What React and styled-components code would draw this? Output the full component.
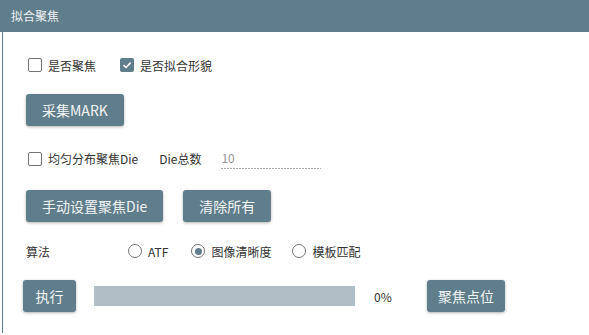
import styled, { createGlobalStyle } from 'styled-components';

const GlobalStyle = createGlobalStyle`
  body {
    margin: 0;
    background: #fff;
    font-family: 'Noto Sans CJK SC', 'Noto Sans', sans-serif;
    color: #333;
  }
`;

const Panel = styled.div`
  width: 589px;
  height: 335px;
  overflow: hidden;
`;

const Header = styled.div`
  height: 32px;
  line-height: 31px;
  padding-left: 11px;
  background: #607d8b;
  color: #eef2f4;
  font-size: 12px;
`;

const Body = styled.div`
  margin-left: 2px;
  height: 301px;
  border-left: 1px solid #607d8b;
  padding-left: 23px;
  display: flex;
  flex-direction: column;
`;

const Row = styled.div`
  display: flex;
  align-items: center;
  height: ${(p) => p.$h || 18}px;
  margin-top: ${(p) => p.$mt || 0}px;
  margin-left: ${(p) => p.$ml || 0}px;
  font-size: 12px;
`;

const Check = styled.label`
  display: flex;
  align-items: center;
  margin-left: 2px;
  margin-right: ${(p) => p.$mr || 0}px;
  gap: 6px;
  white-space: nowrap;
`;

const Box = styled.span`
  box-sizing: border-box;
  width: 14px;
  height: 14px;
  border-radius: 2px;
  border: ${(p) => (p.$on ? 'none' : '1.6px solid #737373')};
  background: ${(p) => (p.$on ? '#607d8b' : '#fff')};
  display: flex;
  align-items: center;
  justify-content: center;
`;

const Radio = styled.label`
  display: flex;
  align-items: center;
  gap: 6px;
  margin-right: ${(p) => p.$mr || 0}px;
  white-space: nowrap;
`;

const Circle = styled.span`
  box-sizing: border-box;
  width: 14px;
  height: 14px;
  border-radius: 50%;
  border: 1.6px solid #737373;
  display: flex;
  align-items: center;
  justify-content: center;

  &::after {
    content: '';
    width: 7px;
    height: 7px;
    border-radius: 50%;
    background: ${(p) => (p.$on ? '#607d8b' : 'transparent')};
  }
`;

const Button = styled.button`
  height: 32px;
  padding: 0 ${(p) => p.$px || 16}px;
  margin-right: ${(p) => p.$mr || 0}px;
  border: none;
  border-radius: 3px;
  background: #607d8b;
  color: #f2f5f6;
  font-family: inherit;
  font-size: 14px;
  box-shadow: 0 1px 3px rgba(0, 0, 0, 0.3);
  white-space: nowrap;
`;

const Label = styled.span`
  width: ${(p) => p.$w || 'auto'};
  margin-left: ${(p) => p.$ml || 0}px;
  margin-right: ${(p) => p.$mr || 0}px;
  white-space: nowrap;
`;

const Count = styled.input`
  box-sizing: border-box;
  width: 100px;
  height: 23px;
  margin-top: -2px;
  padding: 0;
  border: none;
  outline: none;
  font-family: inherit;
  font-size: 12px;
  color: #999;
  background: repeating-linear-gradient(to right, #aaa 0 2px, transparent 2px 3px) left bottom / 100% 1px no-repeat;
`;

const Progress = styled.div`
  width: 261px;
  height: 20px;
  margin: 0 18px;
  background: #b0bec5;
`;

const Percent = styled.span`
  width: 53px;
  padding-left: 1px;
  font-size: 12px;
`;

const Check1 = ({ on }) => (
  <Box $on={on}>
    {on && (
      <svg width="10" height="10" viewBox="0 0 10 10">
        <path d="M1.5 5.2 L4 7.5 L8.6 2.6" fill="none" stroke="#fff" strokeWidth="1.6" />
      </svg>
    )}
  </Box>
);

export default function App() {
  return (
    <>
      <GlobalStyle />
      <Panel>
        <Header>拟合聚焦</Header>
        <Body>
          <Row $mt={24}>
            <Check $mr={22}>
              <Check1 />
              是否聚焦
            </Check>
            <Check>
              <Check1 on />
              是否拟合形貌
            </Check>
          </Row>
          <Row $mt={20} $h={32}>
            <Button>采集MARK</Button>
          </Row>
          <Row $mt={24} $h={17}>
            <Check $mr={21}>
              <Check1 />
              均匀分布聚焦Die
            </Check>
            <Label $mr={20}>Die总数</Label>
            <Count defaultValue="10" />
          </Row>
          <Row $mt={23} $h={32}>
            <Button $mr={20}>手动设置聚焦Die</Button>
            <Button>清除所有</Button>
          </Row>
          <Row $mt={20}>
            <Label $w="102px">算法</Label>
            <Radio $mr={23}>
              <Circle />
              ATF
            </Radio>
            <Radio $mr={21}>
              <Circle $on />
              图像清晰度
            </Radio>
            <Radio>
              <Circle />
              模板匹配
            </Radio>
          </Row>
          <Row $mt={20} $h={32} $ml={-3}>
            <Button $px={12.5}>执行</Button>
            <Progress />
            <Percent>0%</Percent>
            <Button $px={11}>聚焦点位</Button>
          </Row>
        </Body>
      </Panel>
    </>
  );
}
